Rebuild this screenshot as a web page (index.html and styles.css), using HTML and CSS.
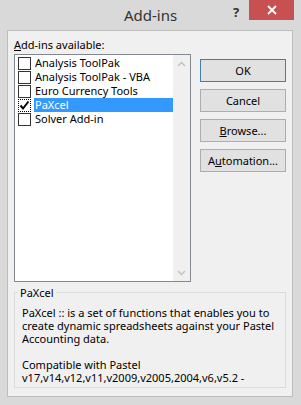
FILE: index.html
```html
<!DOCTYPE html>
<html lang="en">
<head>
    <meta charset="UTF-8">
    <meta name="viewport" content="width=device-width, initial-scale=1.0">
    <title>Add-ins</title>
    <link rel="stylesheet" href="styles.css">
</head>
<body>
    <div class="window">
        <div class="titlebar">
            <div></div>
            <div class="title">Add-ins</div>
            <div class="controls">
                <span class="help">?</span>
                <span class="close">
                    <svg width="10" height="10" viewBox="0 0 10 10"><path d="M1 1 L9 9 M9 1 L1 9" stroke="#fff" stroke-width="1.8" fill="none"/></svg>
                </span>
            </div>
        </div>
        <div class="client">
            <div class="main">
                <div class="left">
                    <div class="label"><u>A</u>dd-ins available:</div>
                    <div class="listbox">
                        <ul class="items">
                            <li><span class="check"></span><span class="name">Analysis ToolPak</span></li>
                            <li><span class="check"></span><span class="name">Analysis ToolPak - VBA</span></li>
                            <li><span class="check"></span><span class="name">Euro Currency Tools</span></li>
                            <li class="selected">
                                <span class="check checked">
                                    <svg width="11" height="11" viewBox="0 0 11 11"><path d="M1.5 5.5 L4 8.5 L9.5 1.5" stroke="#000" stroke-width="2" fill="none"/></svg>
                                </span>
                                <span class="name">PaXcel</span>
                            </li>
                            <li><span class="check"></span><span class="name">Solver Add-in</span></li>
                        </ul>
                        <div class="scrollbar">
                            <svg width="9" height="6" viewBox="0 0 9 6"><path d="M1 5 L4.5 1.5 L8 5" stroke="#c2c2c2" stroke-width="1.5" fill="none"/></svg>
                            <svg width="9" height="6" viewBox="0 0 9 6"><path d="M1 1 L4.5 4.5 L8 1" stroke="#c2c2c2" stroke-width="1.5" fill="none"/></svg>
                        </div>
                    </div>
                </div>
                <div class="buttons">
                    <div class="btn default">OK</div>
                    <div class="btn">Cancel</div>
                    <div class="btn"><u>B</u>rowse...</div>
                    <div class="btn">A<u>u</u>tomation...</div>
                </div>
            </div>
            <fieldset class="info">
                <legend>PaXcel</legend>
                <p>PaXcel :: is a set of functions that enables you to<br>create dynamic spreadsheets against your Pastel<br>Accounting data.</p>
                <p>Compatible with Pastel<br>v17,v14,v12,v11,v2009,v2005,2004,v6,v5.2 -</p>
            </fieldset>
        </div>
    </div>
</body>
</html>
```
FILE: styles.css
```css
body {
    margin: 0;
    background-color: #d9d9d9;
}

.window {
    width: 301px;
    height: 405px;
    background-color: #d9d9d9;
    display: flex;
    flex-direction: column;
    font-family: "Noto Sans", sans-serif;
    font-size: 11px;
    color: #000;
}

.titlebar {
    flex: none;
    height: 30px;
    display: grid;
    grid-template-columns: 1fr auto 1fr;
}

.title {
    font-size: 15px;
    line-height: 30px;
    color: #333;
}

.controls {
    justify-self: end;
    display: flex;
    align-items: flex-start;
    margin-right: 7px;
}

.help {
    width: 26px;
    height: 20px;
    line-height: 24px;
    text-align: center;
    font-weight: bold;
    font-size: 13px;
    color: #333;
}

.close {
    width: 45px;
    height: 20px;
    background-color: #c75050;
    display: flex;
    justify-content: center;
    align-items: center;
}

.client {
    flex: 1;
    min-height: 0;
    margin: 0 8px 8px 7px;
    border: 1px solid #bdbdbd;
    background-color: #f0f0f0;
    padding: 6px 6px 8px;
    display: flex;
    flex-direction: column;
}

.main {
    display: flex;
    gap: 9px;
}

.left {
    width: 177px;
}

.label {
    line-height: 15px;
    margin-bottom: 2px;
}

.listbox {
    height: 226px;
    border: 1px solid #828790;
    background-color: #fff;
    display: flex;
}

.items {
    flex: 1;
    list-style: none;
    margin: 0;
    padding: 1px 0 0;
}

.items li {
    height: 14px;
    display: flex;
    align-items: center;
}

.check {
    width: 11px;
    height: 11px;
    margin: 0 3px 0 3px;
    border: 1px solid #333;
    background-color: #fff;
    display: flex;
    justify-content: center;
    align-items: center;
}

.check.checked {
    border: 1px dotted #000;
}

.name {
    flex: 1;
    line-height: 14px;
    padding-left: 1px;
}

.selected .name {
    background-color: #3399ff;
    color: #fff;
}

.scrollbar {
    width: 17px;
    background-color: #f0f0f0;
    display: flex;
    flex-direction: column;
    justify-content: space-between;
    align-items: center;
    padding: 6px 0 5px;
}

.buttons {
    width: 86px;
    padding-top: 22px;
    display: flex;
    flex-direction: column;
    gap: 7px;
}

.btn {
    height: 21px;
    line-height: 21px;
    text-align: center;
    border: 1px solid #adadad;
    background-color: #e1e1e1;
}

.btn.default {
    border-color: #3c7fb1;
}

.info {
    flex: 1;
    min-height: 0;
    margin: 3px 0 0;
    padding: 0 0 0 7px;
    border: 1px solid #dcdcdc;
}

.info legend {
    margin-left: -4px;
    padding: 0 2px;
    line-height: 15px;
}

.info p {
    margin: 6px 0 13px;
    line-height: 13px;
}
```
